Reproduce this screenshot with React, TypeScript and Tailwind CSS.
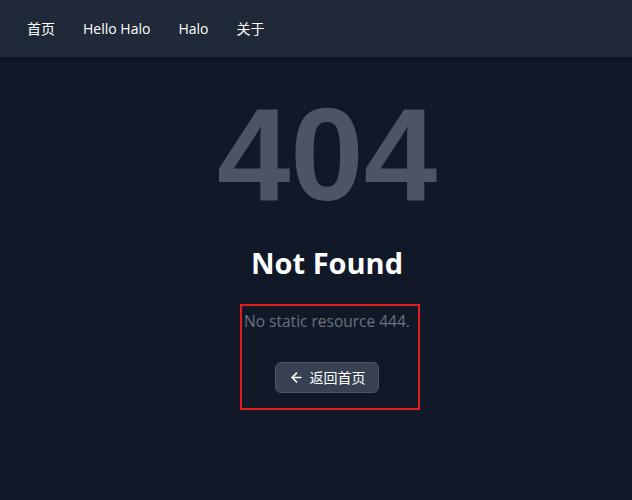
import React from "react";

export default function App() {
  const font = { fontFamily: '"Open Sans", "Noto Sans", "Noto Sans CJK SC", sans-serif' };
  return (
    <div className="min-h-[500px] bg-[#111827] relative" style={font}>
      <header className="h-[58px] bg-[#1f2937] border-b border-[#0f172a] shadow flex items-center px-[27px] gap-[28px] text-[14px] text-white">
        <span>首页</span>
        <span>Hello Halo</span>
        <span>Halo</span>
        <span>关于</span>
      </header>
      <main className="flex flex-col items-center pt-[31px] pl-[22px]">
        <div className="text-[132px] leading-none font-bold text-[#4b5563]" style={{ fontFamily: '"Liberation Sans", Arial, sans-serif' }}>404</div>
        <h1 className="mt-[24px] text-[29px] leading-[36px] font-bold text-white">Not Found</h1>
        <p className="mt-[28px] text-[15.5px] leading-[24px] text-[#6b7280]">No static resource 444.</p>
        <button className="mt-[29px] h-[31px] w-[104px] flex items-center justify-center gap-[6px] rounded-md bg-[#374151] border border-[#4b5563] text-white text-[14px]">
          <svg width="15" height="15" viewBox="0 0 24 24" fill="none" stroke="currentColor" strokeWidth="2.5" strokeLinecap="round" strokeLinejoin="round">
            <path d="M19 12H5" />
            <path d="M12 19l-7-7 7-7" />
          </svg>
          <span>返回首页</span>
        </button>
      </main>
      <div className="absolute left-[240px] top-[304px] w-[180px] h-[106px] border-2 border-[#e11d1d] pointer-events-none" />
    </div>
  );
}
